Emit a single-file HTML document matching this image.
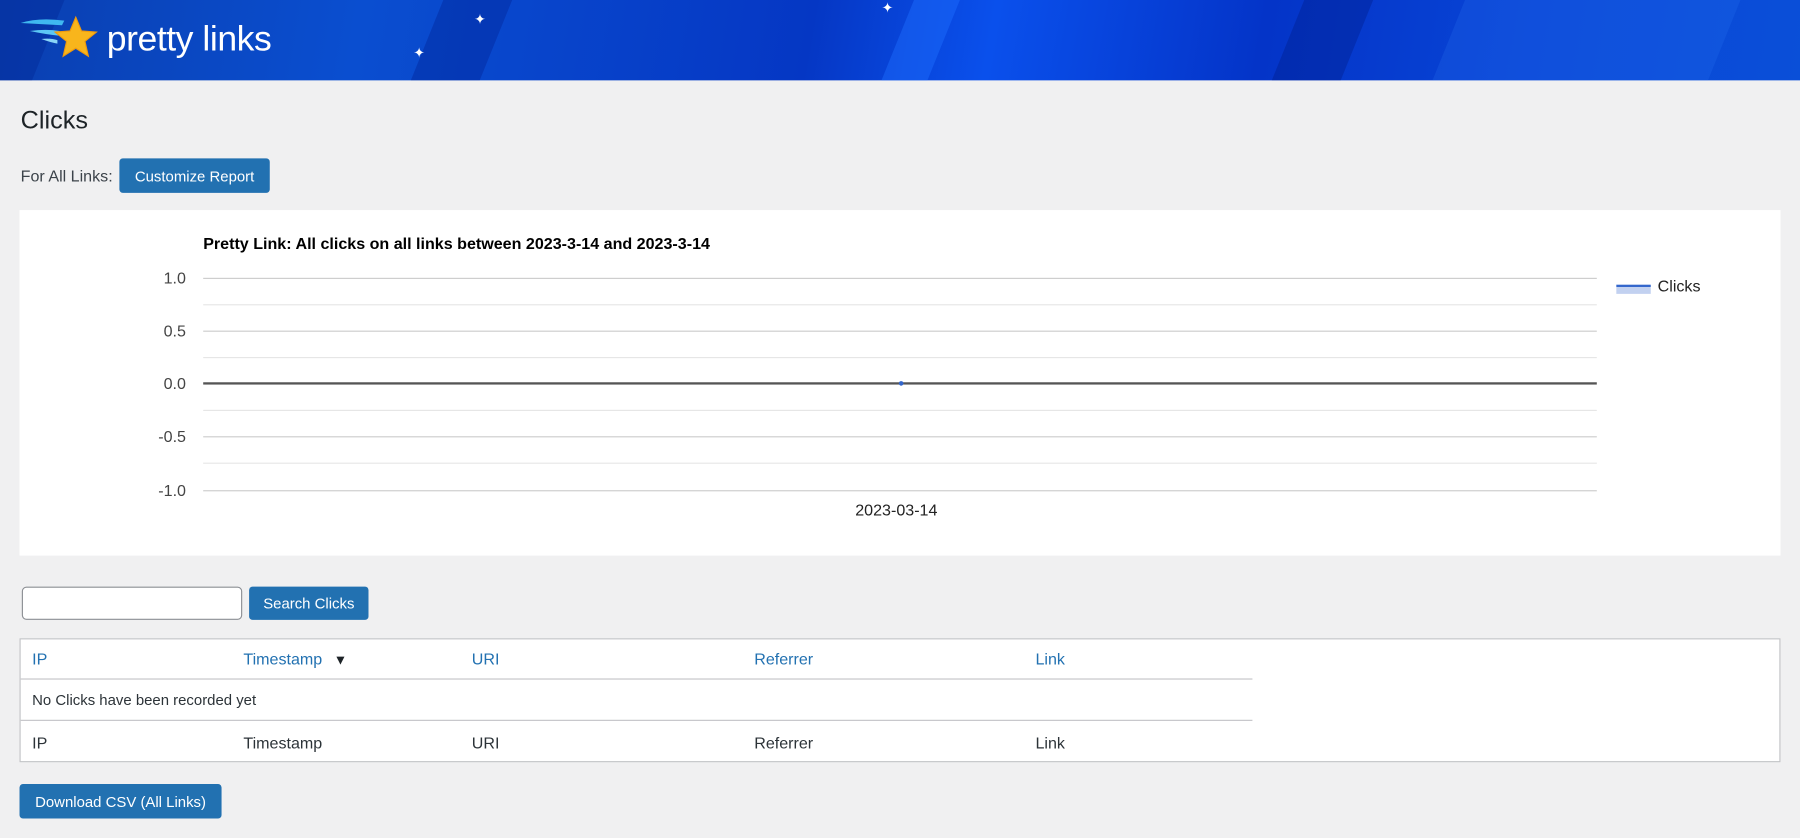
<!DOCTYPE html>
<html><head><meta charset="utf-8"><style>
*{box-sizing:border-box;margin:0;padding:0}
html,body{width:1800px;height:838px;overflow:hidden;background:#f0f0f1}
#w{position:absolute;left:0;top:0;width:1568px;height:730px;transform:scale(1.147959);transform-origin:0 0;font-family:"Liberation Sans",Arial,sans-serif;color:#1d2327}
.a{position:absolute}
.hdr{left:0;top:0;width:1568px;height:70px;background:linear-gradient(100deg,#0a3fb0 0%,#0a4ed0 20%,#0537c4 45%,#0a50ec 55%,#0434c8 70%,#0845d6 85%,#0a4fd8 100%);overflow:hidden}
.band{position:absolute;top:-10px;height:100px;transform:skewX(-22deg)}
.btn{position:absolute;background:#2271b1;color:#fff;border-radius:3px;font-size:13px;display:flex;align-items:center;justify-content:center}
.gl{position:absolute;left:177px;width:1214px;height:1px;background:#e6e6e6}
.yl{position:absolute;left:100px;width:62px;text-align:right;font-size:14px;color:#444}
.th{position:absolute;font-size:14px;color:#2271b1}
.td{position:absolute;font-size:14px;color:#2c3338}
</style></head><body><div id="w">
<div class="a hdr">
<div class="band" style="left:370px;width:60px;background:rgba(0,30,140,.35)"></div>
<div class="band" style="left:780px;width:40px;background:rgba(30,110,255,.45)"></div>
<div class="band" style="left:1120px;width:60px;background:rgba(0,30,140,.4)"></div>
<div class="band" style="left:1260px;width:240px;background:rgba(40,110,240,.25)"></div>
<div class="band" style="left:-40px;width:80px;background:rgba(0,30,140,.3)"></div>
<svg class="a" style="left:14px;top:12px" width="80" height="44" viewBox="0 0 80 44">
<path d="M4 8 Q20 3 42 6 L40 10 Q22 9 4 8Z" fill="#3fb8f0"/>
<path d="M12 15 Q26 13 38 15 L37 19 Q26 18 12 15Z" fill="#5cc8f5"/>
<path d="M22 22 Q30 21 36 23 L36 26 Q30 25 22 22Z" fill="#8ad6f7"/>
<path d="M52 3 L57 15 L70 16 L60 24 L63 37 L52 30 L41 37 L44 24 L34 16 L47 15Z" fill="#f8b51c" stroke="#f09a0c" stroke-width="1"/>
</svg>
<div class="a" style="left:93px;top:16px;font-size:31px;color:#fff;letter-spacing:-.4px">pretty links</div>
<div class="a" style="left:413px;top:10px;color:#fff;font-size:12px">✦</div>
<div class="a" style="left:360px;top:39px;color:#fff;font-size:12px">✦</div>
<div class="a" style="left:768px;top:0px;color:#fff;font-size:12px">✦</div>
</div>
<div class="a" style="left:18px;top:92px;font-size:22px">Clicks</div>
<div class="a" style="left:18px;top:145px;font-size:14px;color:#3c434a">For All Links:</div>
<div class="btn" style="left:104px;top:138px;width:131px;height:30px">Customize Report</div>
<div class="a" style="left:17px;top:183px;width:1534px;height:301px;background:#fff"></div>
<div class="a" style="left:177px;top:204px;font-size:14px;font-weight:bold;color:#000">Pretty Link: All clicks on all links between 2023-3-14 and 2023-3-14</div>
<div class="gl" style="top:242px;background:#ccc"></div>
<div class="gl" style="top:265px"></div>
<div class="gl" style="top:288px;background:#ccc"></div>
<div class="gl" style="top:311px"></div>
<div class="gl" style="top:333px;height:2px;background:#555"></div>
<div class="gl" style="top:357px"></div>
<div class="gl" style="top:380px;background:#ccc"></div>
<div class="gl" style="top:403px"></div>
<div class="gl" style="top:427px;background:#ccc"></div>
<div class="yl" style="top:234px">1.0</div>
<div class="yl" style="top:280px">0.5</div>
<div class="yl" style="top:326px">0.0</div>
<div class="yl" style="top:372px">-0.5</div>
<div class="yl" style="top:419px">-1.0</div>
<div class="a" style="left:783px;top:332px;width:4px;height:4px;border-radius:50%;background:#3366cc"></div>
<div class="a" style="left:745px;top:436px;font-size:14px;color:#222">2023-03-14</div>
<div class="a" style="left:1408px;top:248px;width:30px;height:2px;background:#3366cc"></div>
<div class="a" style="left:1408px;top:250px;width:30px;height:6px;background:#c2d1f0"></div>
<div class="a" style="left:1444px;top:241px;font-size:14px;color:#222">Clicks</div>
<div class="a" style="left:19px;top:511px;width:192px;height:29px;background:#fff;border:1px solid #8c8f94;border-radius:4px"></div>
<div class="btn" style="left:217px;top:511px;width:104px;height:29px">Search Clicks</div>
<div class="a" style="left:17px;top:556px;width:1534px;height:108px;background:#fff;border:1px solid #c3c4c7"></div>
<div class="a" style="left:18px;top:591px;width:1073px;height:1px;background:#c3c4c7"></div>
<div class="a" style="left:18px;top:627px;width:1073px;height:1px;background:#c3c4c7"></div>
<div class="th" style="left:28px;top:566px">IP</div>
<div class="th" style="left:212px;top:566px">Timestamp <span style="color:#1d2327;margin-left:6px;font-size:12px">▼</span></div>
<div class="th" style="left:411px;top:566px">URI</div>
<div class="th" style="left:657px;top:566px">Referrer</div>
<div class="th" style="left:902px;top:566px">Link</div>
<div class="td" style="left:28px;top:602px;font-size:13px">No Clicks have been recorded yet</div>
<div class="td" style="left:28px;top:639px">IP</div>
<div class="td" style="left:212px;top:639px">Timestamp</div>
<div class="td" style="left:411px;top:639px">URI</div>
<div class="td" style="left:657px;top:639px">Referrer</div>
<div class="td" style="left:902px;top:639px">Link</div>
<div class="btn" style="left:17px;top:683px;width:176px;height:30px">Download CSV (All Links)</div>
</div></body></html>
